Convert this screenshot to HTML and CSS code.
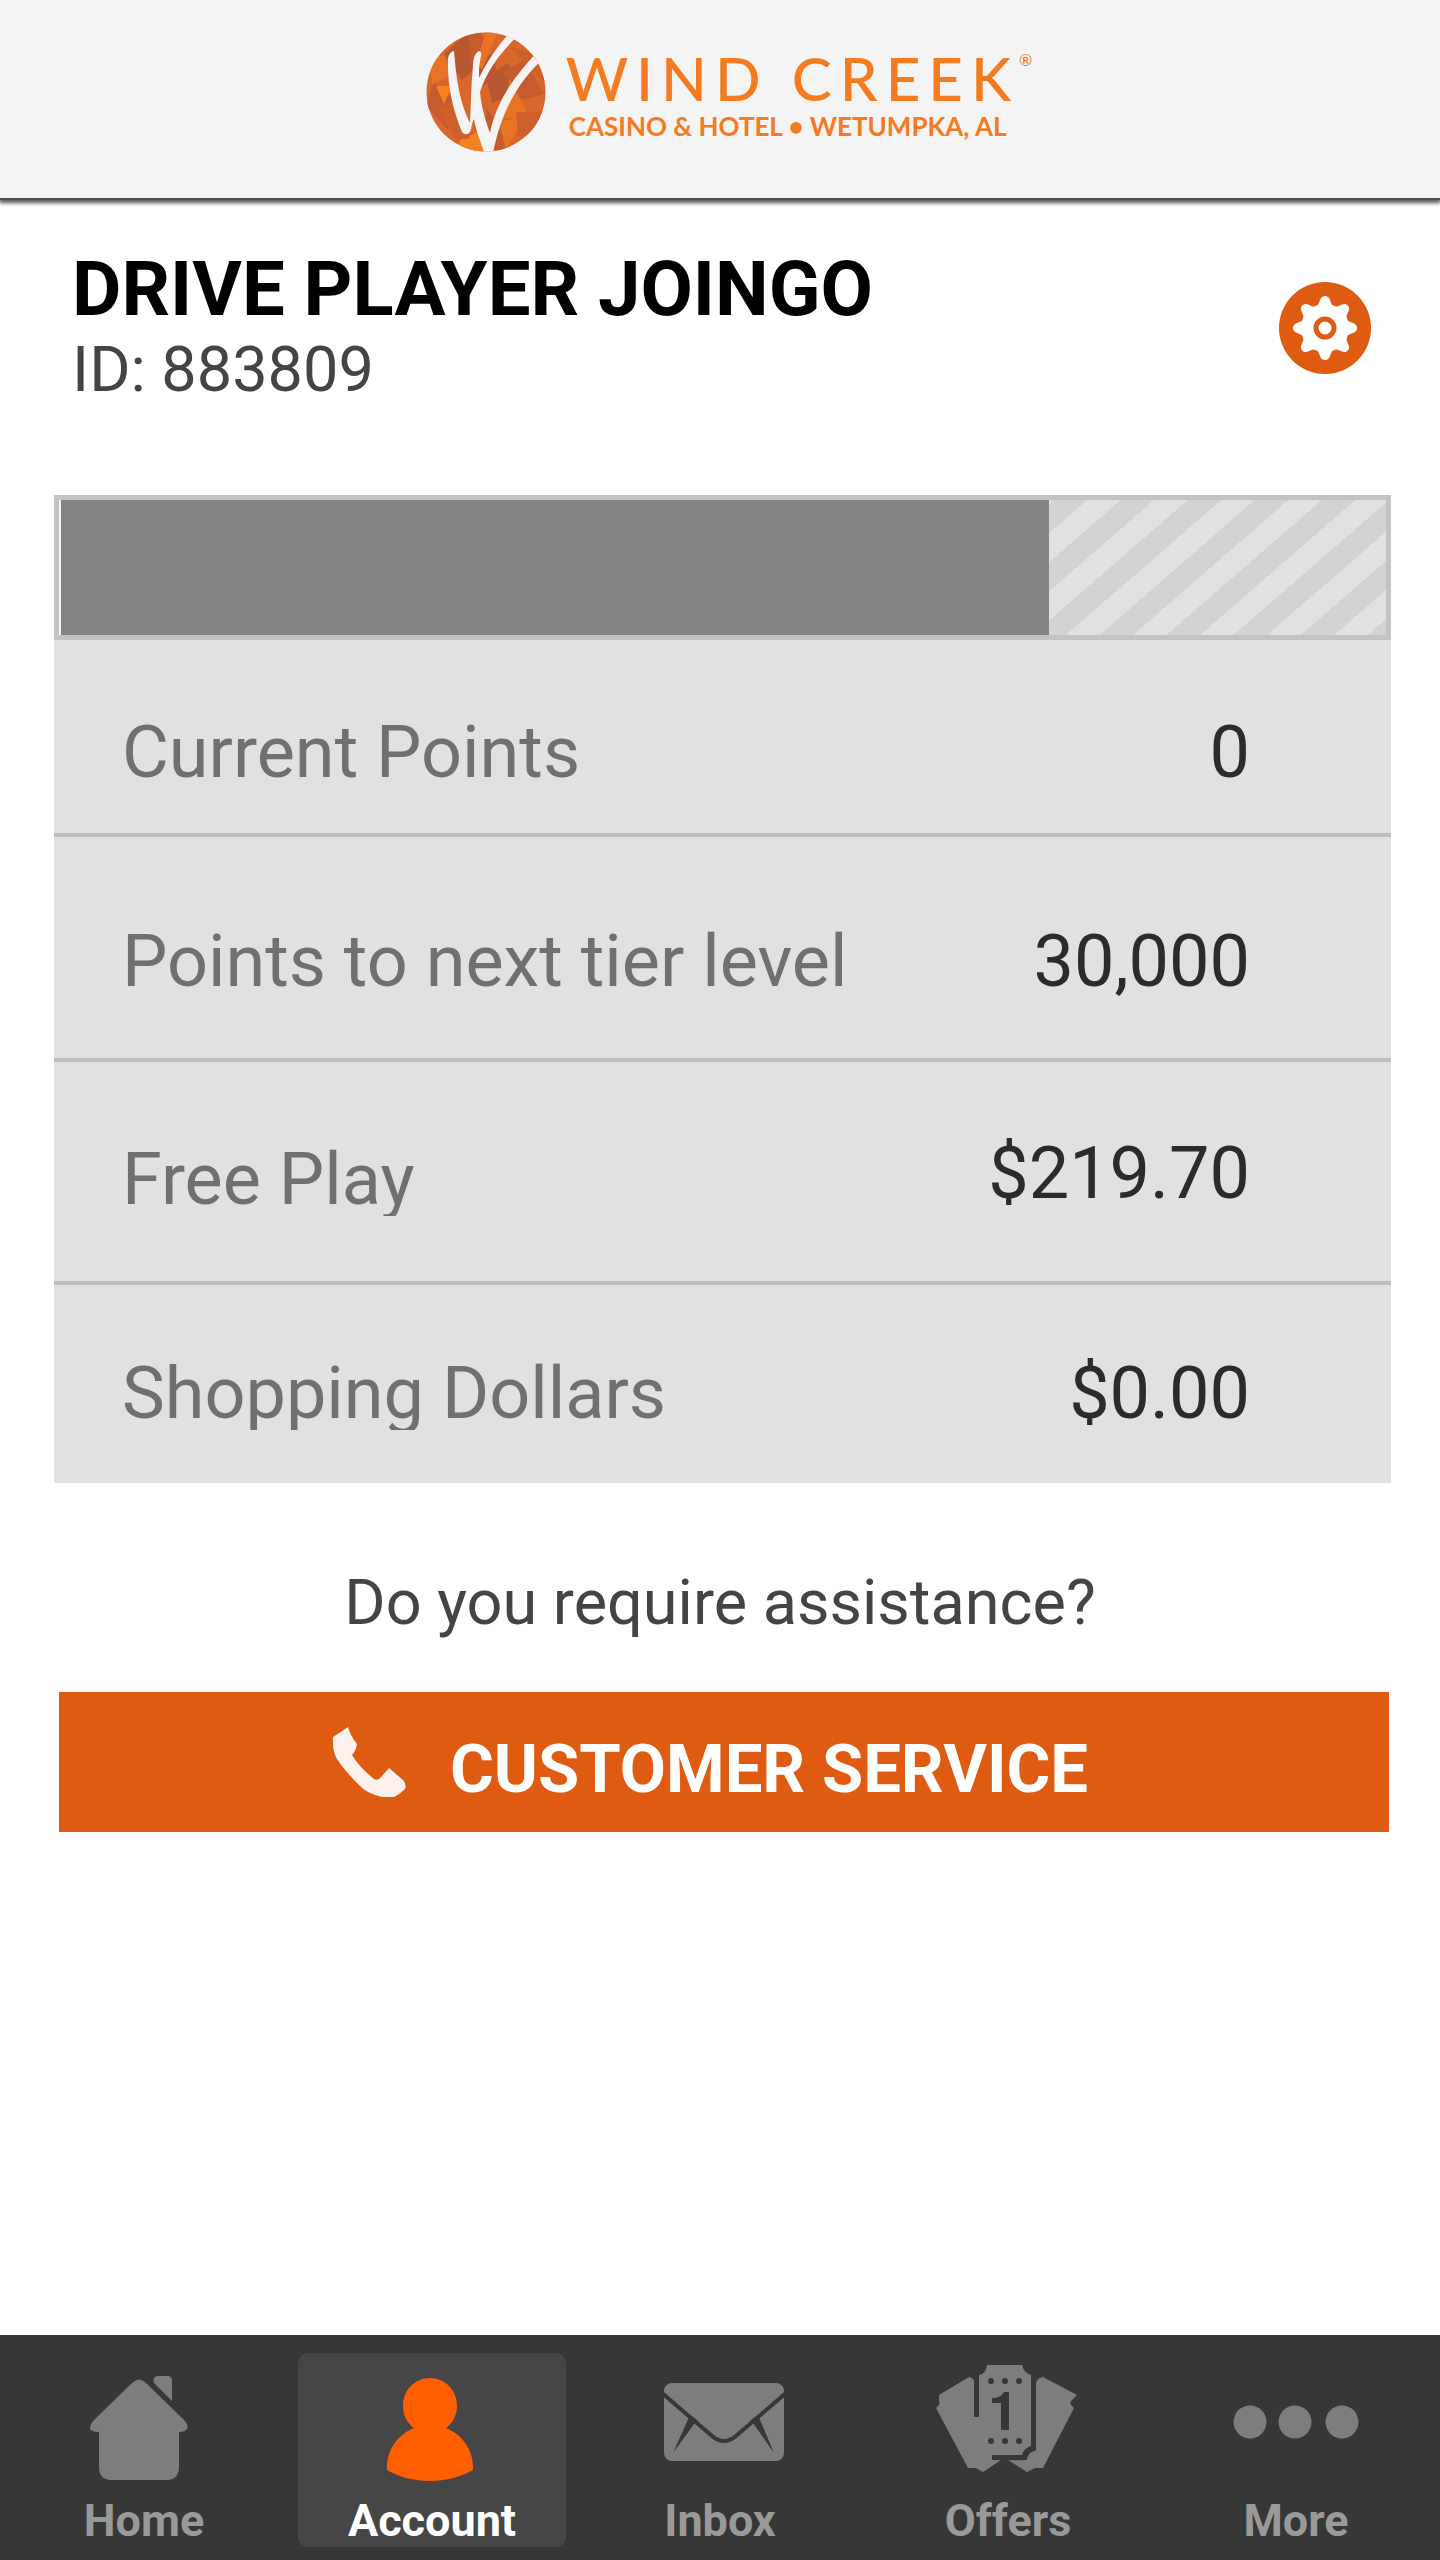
FILE: index.html
```html
<!DOCTYPE html>
<html lang="en">
<head>
<meta charset="utf-8">
<meta name="viewport" content="width=device-width, initial-scale=1">
<title>Account - Wind Creek</title>
<link rel="stylesheet" href="styles.css">
</head>
<body>
<header class="site-header">
  <div class="logo">
    <svg class="logo-mark" viewBox="0 0 120 120" aria-hidden="true">
      <defs><clipPath id="disc"><circle cx="60" cy="60" r="59.500"/></clipPath></defs>
      <g clip-path="url(#disc)">
        <path fill="#d9662a" d="M0 0h120v120H0z"/>
        <path fill="#b95632" d="M18 22 42 0 56 30 36 48zM60 45l22-14 14 28-30 12zM50 30l16-8 6 20-22 18z"/>
        <path fill="#c65c2e" d="M42 0h12l8 16-16 22zM76 40l22-12 20 34-22 6zM8 50 0 74l22 24 14-24zM60 74l26 44H60z"/>
        <path fill="#e87325" d="M60 0h12L56 38l-6-8zM84 48l20 38H72zM4 30l14-8 6 22-18 8zM74 90l24-6-18 36z"/>
        <path fill="#f6811f" d="M10 54h16l-8 18zM34 108l18-8 6 20H32z"/>
        <path fill="#cf602c" d="M90 80h30v24H92zM84 14l24 8 12 30-16-14zM12 76l16-6 16 36-14 2z"/>
        <path fill="#f4f4f4" d="M22 26q2-7 6-7 2 24 4 34c3 17 7 28 12 38 1-20 1-38 3-57q0-12 6-15 3 1 2 5c-2 9-2 15-2 22C61 29 73 12 86-2l8 4C76 18 61 38 54 60c1 12 5 28 10 41C70 70 88 44 115 16l6 7C94 47 76 76 67 121H58C55 109 50 100 48 87c-3 5-2 11-5 14q-4 3-7-1C27 78 21 53 22 26z"/>
      </g>
    </svg>
    <div class="logo-text">
      <div class="logo-name">WIND CREEK<sup class="logo-reg">®</sup></div>
      <div class="logo-tag">CASINO &amp; HOTEL • WETUMPKA, AL</div>
    </div>
  </div>
</header>

<main class="account">
  <section class="player">
    <div>
      <h1 class="player-name">DRIVE PLAYER JOINGO</h1>
      <p class="player-id">ID: 883809</p>
    </div>
    <button class="settings" type="button" aria-label="Settings">
      <svg class="settings-icon" viewBox="-46 -46 92 92" aria-hidden="true">
        <circle r="46" fill="#de5b11"/>
        <g fill="#fff">
          <circle r="24"/>
          <g id="cog">
            <path id="tooth" d="M-11-20C-7-22-6-25-5-28-4-31-2-32 0-32S4-31 5-28C6-25 7-22 11-20z"/>
            <use href="#tooth" transform="rotate(45)"/>
            <use href="#tooth" transform="rotate(90)"/>
            <use href="#tooth" transform="rotate(135)"/>
          </g>
          <use href="#cog" transform="rotate(180)"/>
        </g>
        <circle r="9" fill="#fff" stroke="#de5b11" stroke-width="5"/>
      </svg>
    </button>
  </section>

  <section class="panel">
    <div class="tier-bar"><div class="tier-fill" style="width:74.6%"></div><div class="tier-rest"></div></div>
    <dl class="stats">
      <div class="stat stat-first"><dt>Current Points</dt><dd>0</dd></div>
      <div class="stat"><dt>Points to next tier level</dt><dd>30,000</dd></div>
      <div class="stat stat-money"><dt>Free Play</dt><dd>$219.70</dd></div>
      <div class="stat stat-last"><dt>Shopping Dollars</dt><dd>$0.00</dd></div>
    </dl>
  </section>

  <p class="question">Do you require assistance?</p>
  <button class="service" type="button">
    <svg class="phone" viewBox="0 0 74 72" aria-hidden="true"><path fill="#fcf1ed" d="M1 11 16 1Q18 9 25 18 24 25 20 29 27 41 42 53q4 2 7-2l8-9 14 12q4 5 2 9-5 5-11 8H50Q34 67 28 60 13 45 7 36 0 28 1 11z"/></svg>
    <span class="service-label">CUSTOMER SERVICE</span>
  </button>
</main>

<nav class="tabs" aria-label="Main">
  <a class="tab" href="#home">
    <svg class="tab-icon" viewBox="0 0 160 128" aria-hidden="true"><path fill="#7d7d7d" d="M68 30q7-7 14 0l38 37q5 5 3 9-2 3-8 3v35q0 12-11 13H46q-11-1-11-13V79q-7 0-9-3 0-5 4-9zM90 30q-2-7 4-7h11q3 1 3 5v20z"/></svg>
    <span>Home</span>
  </a>
  <a class="tab tab-active" href="#account" aria-current="page">
    <svg class="tab-icon" viewBox="0 0 160 128" aria-hidden="true"><path fill="#ff5f00" d="M78 25c15 0 27 12 27 28 0 9-4 17-11 22 17 7 28 23 27 42-13 7-27 11-43 11s-31-4-43-11c-1-19 10-35 27-42-7-5-11-13-11-22 0-16 12-28 27-28z"/></svg>
    <span>Account</span>
  </a>
  <a class="tab" href="#inbox">
    <svg class="tab-icon" viewBox="0 0 160 128" aria-hidden="true"><rect x="24" y="30" width="120" height="78" rx="8" fill="#7d7d7d"/><path fill="none" stroke="#373737" stroke-width="4" d="M22 40 72 83q12 10 24 0l50-43"/><path fill="#373737" d="m50 62 7 5-24 33zM118 62l-7 5 23 33z"/></svg>
    <span>Inbox</span>
  </a>
  <a class="tab" href="#offers">
    <svg class="tab-icon" viewBox="0 0 160 128" aria-hidden="true">
      <path fill="#7d7d7d" d="M11 42 41 24q6 1 6 8v32h4V22q7-1 8-10h35q2 8 9 10v71q-7 2-9 9H64v5h9l-18 12-7-4h-8L8 55q5-4 3-7zM149 42 115 24q-7 1-7 8v64q-8 3-9 10-1 2-19 1l19 12 8-4h8l31-60q-5-4-3-7z"/>
      <path fill="none" stroke="#373737" stroke-width="4" d="M48 26v38M106 23v73q-8 2-9 9H64"/>
      <path fill="#373737" d="M76 39h5v38h-8V50H64v-5q9 0 12-6z"/>
      <g fill="#373737"><circle cx="63" cy="28" r="3"/><circle cx="77" cy="28" r="3"/><circle cx="91" cy="28" r="3"/><circle cx="63" cy="88" r="3"/><circle cx="77" cy="88" r="3"/><circle cx="91" cy="88" r="3"/></g>
    </svg>
    <span>Offers</span>
  </a>
  <a class="tab" href="#more">
    <svg class="tab-icon" viewBox="0 0 160 128" aria-hidden="true"><g fill="#7d7d7d"><circle cx="34" cy="69" r="16.500"/><circle cx="79" cy="69" r="16.500"/><circle cx="126" cy="69" r="16.500"/></g></svg>
    <span>More</span>
  </a>
</nav>
</body>
</html>
```
FILE: styles.css
```css
* {
  box-sizing: border-box;
}

body {
  margin: 0;
  min-height: 100vh;
  display: flex;
  flex-direction: column;
  background: #fff;
  font-family: Roboto, "Liberation Sans", sans-serif;
}

h1, p, dl, dd {
  margin: 0;
}

/* Header */
.site-header {
  display: flex;
  justify-content: center;
  padding: 32px 0 46px 18px;
  background: #f4f4f4;
  box-shadow: 0 2px 0 #4c4c4e, 0 4px 4px 1px #555;
}

.logo {
  display: flex;
  gap: 20px;
  color: #f47b20;
  font-family: Lato, sans-serif;
}

.logo-mark {
  width: 120px;
  height: 120px;
}

.logo-text {
  padding-top: 16px;
}

.logo-name {
  display: flex;
  font-size: 60px;
  line-height: 60px;
  font-weight: 500;
  letter-spacing: 8px;
}

.logo-reg {
  font-size: 16px;
  line-height: 24px;
  letter-spacing: 0;
}

.logo-tag {
  padding-left: 3px;
  font-size: 26px;
  line-height: 36px;
  font-weight: 700;
}

/* Player */
.account {
  flex: 1;
  display: flex;
  flex-direction: column;
}

.player {
  display: flex;
  justify-content: space-between;
  padding: 48px 69px 0 72px;
}

.player-name {
  font-size: 76px;
  line-height: 86px;
  font-weight: 700;
  color: #000;
}

.player-id {
  font-size: 63px;
  line-height: 76px;
  color: #444;
}

.settings {
  width: 92px;
  height: 92px;
  margin-top: 36px;
  padding: 0;
  border: 0;
  border-radius: 50%;
  background: none;
}

.settings-icon {
  display: block;
  width: 100%;
}

/* Points panel */
.panel {
  margin: 87px 49px 0 54px;
  background: #e1e1e1;
}

.tier-bar {
  display: flex;
  height: 145px;
  border: 5px solid #c3c3c3;
}

.tier-fill {
  border-left: 2px solid #f8f8f8;
  background: #848484;
}

.tier-rest {
  flex: 1;
  background: repeating-linear-gradient(139deg, #e1e1e1 0 3px, #d3d3d3 3px 25px, #e1e1e1 25px 44px);
}

.stat {
  display: flex;
  justify-content: space-between;
  align-items: flex-start;
  height: 225px;
  padding: 89px 141px 0 68px;
  border-bottom: 4px solid #bdbdbd;
  font-size: 72px;
  line-height: 72px;
}

.stat dt {
  color: #707070;
}

.stat dd {
  color: #2b2b2b;
}

.stat-first {
  height: 197px;
  padding-top: 77px;
}

.stat-money {
  height: 223px;
  padding-top: 82px;
}

.stat-last {
  height: 198px;
  padding-top: 73px;
  border-bottom: 0;
}

.stat-money dt,
.stat-last dt {
  overflow: hidden;
}

.stat-money dd {
  line-height: 60px;
}

/* Assistance */
.question {
  padding-top: 84px;
  font-size: 63px;
  line-height: 72px;
  text-align: center;
  color: #444;
}

.service {
  display: flex;
  align-items: center;
  justify-content: center;
  gap: 44px;
  height: 140px;
  margin: 53px 51px 60px 59px;
  padding: 0 28px 0 0;
  border: 0;
  background: #de5b11;
  color: #fff;
  font: 700 67px/80px Roboto, "Liberation Sans", sans-serif;
}

.service-label {
  padding-top: 14px;
}

.phone {
  width: 74px;
  height: 72px;
}

/* Bottom tabs */
.tabs {
  display: grid;
  grid-template-columns: repeat(5, 1fr);
  padding: 18px 0 13px;
  background: #373737;
}

.tab {
  display: flex;
  flex-direction: column;
  align-items: center;
  height: 194px;
  margin: 0 10px;
  border-radius: 10px;
  color: #999;
  font-size: 45px;
  font-weight: 700;
  line-height: 52px;
  text-decoration: none;
}

.tab-active {
  background: #464646;
  color: #fff;
}

.tab-icon {
  width: 160px;
  height: 128px;
  margin-bottom: 14px;
}
```
